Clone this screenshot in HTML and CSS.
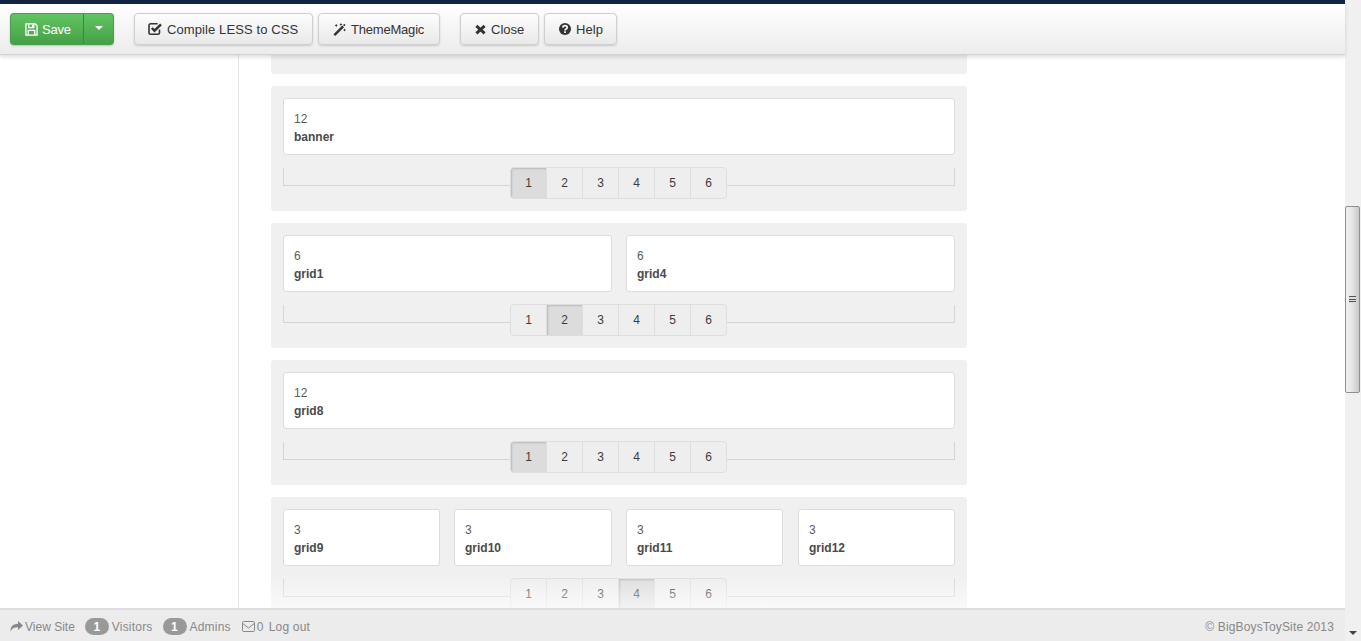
FILE: index.html
```html
<!DOCTYPE html>
<html lang="en">
<head>
<meta charset="utf-8">
<title>Layout</title>
<link rel="stylesheet" href="styles.css">
</head>
<body>
<div class="app">
  <header class="toolbar">
    <div class="save-group">
      <button class="btn-save"><svg class="icon icon-13 icon-save" viewBox="0 0 14 14"><path fill="none" stroke="currentColor" stroke-width="1.4" d="M1 1h10l2 2v10H1zM4 1v4h5.500V1M3.500 13V8h7v5"/><path fill="currentColor" d="M7.500 1.800h1.200v2.400H7.500z"/></svg>Save</button>
      <button class="btn-caret"><span class="caret"></span></button>
    </div>
    <div class="group">
      <button class="btn btn-compile"><svg class="icon icon-compile" viewBox="0 0 14 14"><path fill="none" stroke="currentColor" stroke-width="1.600" d="M11.500 7.500v3.200a1.600 1.600 0 0 1-1.600 1.600H2.600A1.600 1.600 0 0 1 1 10.700V3.400a1.600 1.600 0 0 1 1.600-1.600h7"/><path fill="none" stroke="currentColor" stroke-width="2.400" d="M3.800 6l2.700 2.700L13 2.300"/></svg>Compile LESS to CSS</button>
      <button class="btn btn-magic"><svg class="icon icon-13" viewBox="0 0 14 14"><path fill="currentColor" d="M10 2.700l1.900 1.900L2.400 14 .5 12.100z"/><path fill="currentColor" d="M3.500 1l.6 1 1 .6-1 .6-.6 1-.6-1-1-.6 1-.6zM8.500 0l.6 1 1 .6-1 .6-.6 1-.6-1-1-.6 1-.6zM12.500 6l.6 1 1 .6-1 .6-.6 1-.6-1-1-.6 1-.6zM12.200 .8l1.300 1.300-1.400 1.400-1.300-1.300z"/></svg>ThemeMagic</button>
    </div>
    <div class="group">
      <button class="btn btn-close"><svg class="icon icon-11" viewBox="0 0 11 11"><path fill="none" stroke="currentColor" stroke-width="2.900" d="M1.400 1.900l8.200 7.500M9.600 1.900L1.400 9.400"/></svg>Close</button>
      <button class="btn btn-help"><svg class="icon icon-12" viewBox="0 0 12 12"><circle cx="6" cy="6" r="6" fill="currentColor"/><path fill="none" stroke="#f5f5f5" stroke-width="1.700" d="M3.800 4.600C3.900 3.300 4.800 2.700 6 2.700c1.300 0 2.200.7 2.200 1.800 0 1.500-2.200 1.500-2.200 3"/><path fill="#f5f5f5" d="M5.100 8.300h1.800v1.700H5.100z"/></svg>Help</button>
    </div>
  </header>

  <main class="main">
    <aside class="sidebar"></aside>
    <section class="content">
      <div class="row row-stub"></div>

      <div class="row">
        <div class="cols">
          <div class="card"><div class="num">12</div><div class="name">banner</div></div>
        </div>
        <div class="slider">
          <div class="pager">
            <span class="page active">1</span><span class="page">2</span><span class="page">3</span><span class="page">4</span><span class="page">5</span><span class="page">6</span>
          </div>
        </div>
      </div>

      <div class="row">
        <div class="cols cols-2">
          <div class="card"><div class="num">6</div><div class="name">grid1</div></div>
          <div class="card"><div class="num">6</div><div class="name">grid4</div></div>
        </div>
        <div class="slider">
          <div class="pager">
            <span class="page">1</span><span class="page active">2</span><span class="page">3</span><span class="page">4</span><span class="page">5</span><span class="page">6</span>
          </div>
        </div>
      </div>

      <div class="row">
        <div class="cols">
          <div class="card"><div class="num">12</div><div class="name">grid8</div></div>
        </div>
        <div class="slider">
          <div class="pager">
            <span class="page active">1</span><span class="page">2</span><span class="page">3</span><span class="page">4</span><span class="page">5</span><span class="page">6</span>
          </div>
        </div>
      </div>

      <div class="row">
        <div class="cols cols-4">
          <div class="card"><div class="num">3</div><div class="name">grid9</div></div>
          <div class="card"><div class="num">3</div><div class="name">grid10</div></div>
          <div class="card"><div class="num">3</div><div class="name">grid11</div></div>
          <div class="card"><div class="num">3</div><div class="name">grid12</div></div>
        </div>
        <div class="slider">
          <div class="pager">
            <span class="page">1</span><span class="page">2</span><span class="page">3</span><span class="page active">4</span><span class="page">5</span><span class="page">6</span>
          </div>
        </div>
      </div>
    </section>
    <div class="fade"></div>
  </main>

  <footer class="footer">
    <div class="status">
      <span class="item item-site"><svg class="ficon" viewBox="0 0 13 11"><path fill="currentColor" d="M8 0l5 4.500L8 9V6.300C4.500 6.300 2 7 .6 10.800.2 6 2.500 2.800 8 2.700z"/></svg>View Site</span>
      <span class="item"><span class="badge">1</span>Visitors</span>
      <span class="item"><span class="badge">1</span>Admins</span>
      <span class="item item-mail"><svg class="ficon" viewBox="0 0 13 11"><path fill="none" stroke="currentColor" d="M1.500.5h10a1 1 0 0 1 1 1v8a1 1 0 0 1-1 1h-10a1 1 0 0 1-1-1v-8a1 1 0 0 1 1-1zM.8 2.500L6.500 7l5.700-4.500"/></svg>0</span>
      <span class="item">Log out</span>
    </div>
    <div class="copy">© BigBoysToySite 2013</div>
  </footer>
</div>

<div class="scrollbar">
  <div class="thumb"><span class="grip"></span></div>
  <span class="arrow"></span>
</div>
</body>
</html>
```

FILE: styles.css
```css
* { box-sizing: border-box; }

html, body {
  margin: 0;
  height: 100%;
  overflow: hidden;
}

body {
  display: flex;
  background: #fff;
  font-family: "Liberation Sans", Arial, sans-serif;
  font-size: 12px;
  color: #333;
}

.app {
  flex: 1;
  min-width: 0;
  height: 641px;
  display: flex;
  flex-direction: column;
}

/* toolbar */
.toolbar {
  position: relative;
  z-index: 3;
  flex: none;
  height: 55px;
  padding: 9px 10px 0;
  display: flex;
  align-items: flex-start;
  gap: 20px;
  border-top: 4px solid #0f2443;
  border-bottom: 1px solid #d2d2d2;
  background: linear-gradient(#ffffff, #ececec);
  box-shadow: 0 2px 4px rgba(0, 0, 0, .14);
}

.group {
  display: flex;
  gap: 5px;
}

.save-group {
  display: flex;
}

button {
  font-family: inherit;
  font-size: 13px;
  height: 32px;
  margin: 0;
  display: flex;
  align-items: center;
  cursor: pointer;
}

.btn {
  padding: 0 0 0 14px;
  color: #333;
  background: linear-gradient(#fdfdfd, #e9e9e9);
  border: 1px solid #cfcfcf;
  border-radius: 4px;
  box-shadow: 0 1px 2px rgba(0, 0, 0, .16);
}

.btn-compile { width: 179px; letter-spacing: .1px; }
.btn-magic { width: 122px; letter-spacing: -.2px; }
.btn-close { width: 79px; }
.btn-help { width: 73px; letter-spacing: .1px; }

.btn-save {
  width: 74px;
  padding: 0 0 0 14px;
  color: #fff;
  letter-spacing: -.2px;
  background: linear-gradient(#62c462, #46a046);
  border: 1px solid #4a9d4a;
  border-right: 1px solid #3f8f3f;
  border-radius: 4px 0 0 4px;
  box-shadow: 0 1px 2px rgba(0, 0, 0, .2);
}

.btn-caret {
  width: 30px;
  padding: 0;
  justify-content: center;
  background: linear-gradient(#62c462, #46a046);
  border: 1px solid #4a9d4a;
  border-left: 0;
  border-radius: 0 4px 4px 0;
  box-shadow: 0 1px 2px rgba(0, 0, 0, .2);
}

.caret {
  width: 0;
  height: 0;
  margin-top: -2px;
  border-left: 4px solid transparent;
  border-right: 4px solid transparent;
  border-top: 4px solid #fff;
}

.icon {
  flex: none;
  width: 14px;
  height: 14px;
  margin-right: 5px;
}

.icon-13 { width: 13px; height: 13px; }
.icon-12 { width: 12px; height: 12px; }
.icon-11 { width: 11px; height: 11px; }
.icon-save { margin-right: 4px; }
.icon-compile { margin-left: -1px; }

/* main */
.main {
  position: relative;
  flex: 1;
  min-height: 0;
  overflow: hidden;
  display: flex;
}

.sidebar {
  flex: none;
  width: 239px;
  border-right: 1px solid #e4e4e4;
}

.content {
  flex: none;
  width: 696px;
  margin-left: 32px;
}

.row {
  margin-bottom: 12px;
  padding: 12px;
  background: #f0f0f0;
  border-radius: 3px;
}

.row-stub {
  height: 19px;
  padding: 0;
  border-radius: 0 0 3px 3px;
}

.cols {
  display: flex;
  gap: 14px;
}

.card {
  flex: 1 1 0;
  height: 57px;
  padding: 11px 10px 8px;
  background: #fff;
  border: 1px solid #dcdcdc;
  border-radius: 3px;
  line-height: 18px;
}

.cols-4 .card { flex: 0 0 157px; }
.cols-4 .card:nth-child(2) { flex-basis: 158px; }
.cols-4 .card:last-child { margin-left: auto; }

.num { color: #5c5c5c; }

.name {
  font-weight: bold;
  color: #4a4a4a;
}

.slider {
  position: relative;
  height: 32px;
  margin-top: 12px;
  display: flex;
  justify-content: center;
}

.slider::before {
  content: "";
  position: absolute;
  left: 0;
  right: 0;
  top: 2px;
  height: 17px;
  border: 1px solid #d4d4d4;
  border-top: 0;
  transform: translateY(-1px);
}

.pager {
  position: relative;
  display: flex;
  height: 32px;
  margin-right: 1px;
  background: #eee;
  border: 1px solid #dedede;
  border-radius: 4px;
  overflow: hidden;
}

.page {
  width: 36px;
  display: flex;
  align-items: center;
  justify-content: center;
  border-left: 1px solid #dedede;
  color: #3c3c3c;
}

.page:first-child {
  width: 35px;
  border-left: 0;
}

.page.active {
  background: #dcdcdc;
  box-shadow: inset 1px 1px 2px rgba(0, 0, 0, .16);
}

.fade {
  position: absolute;
  left: 239px;
  right: 0;
  bottom: 0;
  height: 34px;
  background: linear-gradient(rgba(255, 255, 255, 0), rgba(255, 255, 255, .65));
}

/* footer */
.footer {
  position: relative;
  z-index: 2;
  flex: none;
  height: 33px;
  padding: 2px 11px 0 10px;
  display: flex;
  align-items: center;
  justify-content: space-between;
  background: #ececec;
  border-top: 2px solid #dedede;
  color: #888;
  letter-spacing: .2px;
}

.status {
  display: flex;
  align-items: center;
  gap: 10px;
}

.item {
  display: flex;
  align-items: center;
}

.item-site { letter-spacing: 0; }

.item-mail { margin-left: 1px; margin-right: -5px; }

.ficon {
  flex: none;
  width: 13px;
  height: 11px;
  margin-right: 2px;
}

.badge {
  width: 24px;
  height: 17px;
  margin-right: 3px;
  display: flex;
  align-items: center;
  justify-content: center;
  background: #999;
  border-radius: 9px;
  color: #fff;
  font-weight: bold;
}

.copy {
  color: #888;
  letter-spacing: .15px;
}

/* window scrollbar */
.scrollbar {
  flex: none;
  width: 16px;
  height: 641px;
  padding: 206px 1px 0 0;
  position: relative;
  background: #f0f0f0;
}

.thumb {
  height: 187px;
  display: flex;
  align-items: center;
  justify-content: center;
  background: linear-gradient(90deg, #f0f0f0, #e6e6e6 45%, #c8c8c8);
  border: 1px solid #8f8f8f;
  border-radius: 2px;
}

.grip {
  width: 7px;
  height: 7px;
  background: repeating-linear-gradient(#555 0, #555 1px, #ddd 1px, #ddd 2.500px);
}

.arrow {
  position: absolute;
  left: 4px;
  bottom: 6px;
  width: 0;
  height: 0;
  border-left: 4px solid transparent;
  border-right: 4px solid transparent;
  border-top: 4px solid #444;
}
```
